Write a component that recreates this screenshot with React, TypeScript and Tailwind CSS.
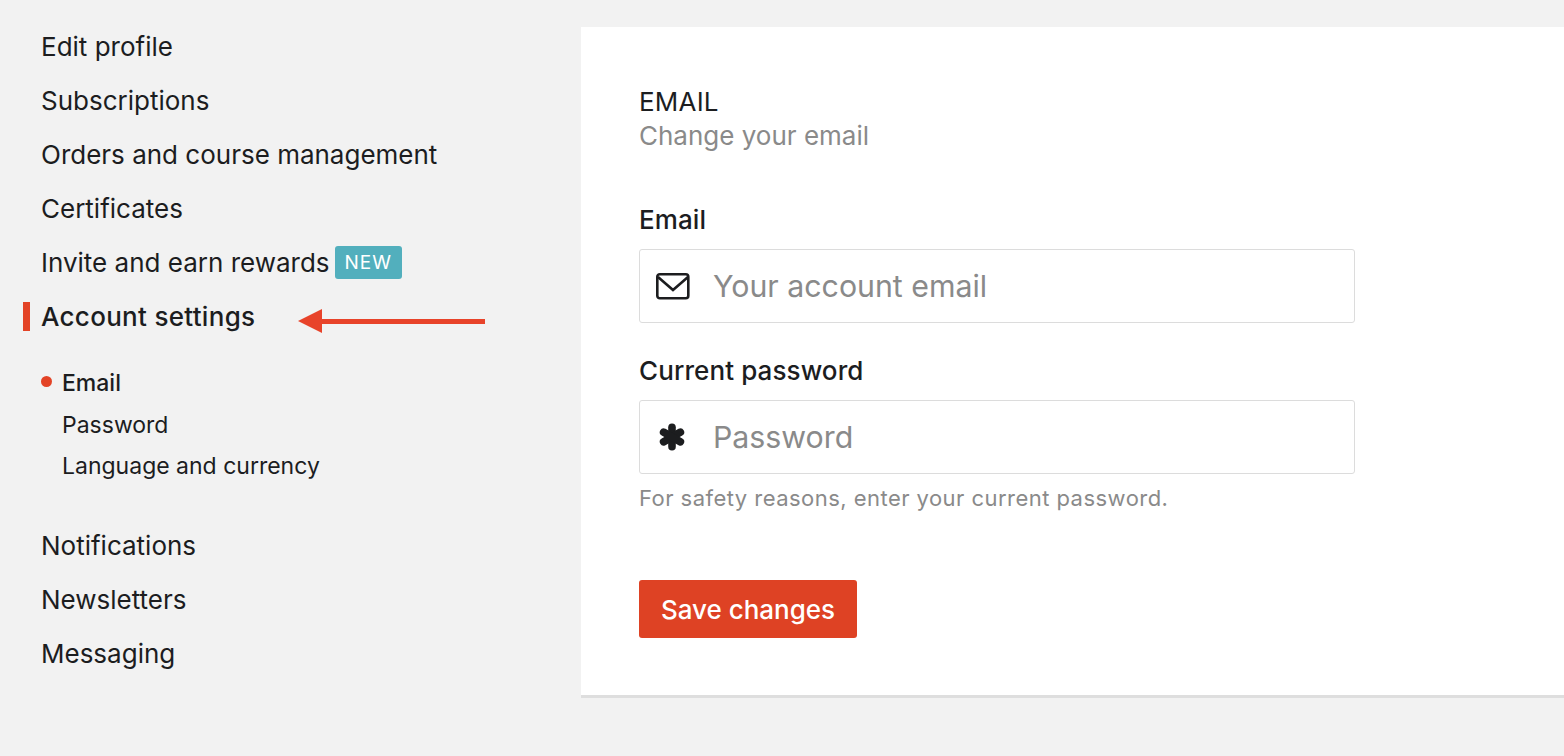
function NavItem({ label, children }: { label: string; children?: React.ReactNode }) {
  return (
    <li className="flex h-[54px] items-center gap-[5px] text-[26px] text-[#1c1d1f]">
      <span>{label}</span>
      {children}
    </li>
  );
}

function Field({ label, placeholder, icon, type = 'text' }: { label: string; placeholder: string; icon: React.ReactNode; type?: string }) {
  return (
    <div>
      <label className="block text-[26px] leading-[34px] font-medium tracking-[0.1px] text-[#1c1d1f]">{label}</label>
      <div className="mt-[12px] flex h-[74px] w-[716px] items-center rounded-[3px] border border-[#dcdcdc] bg-white">
        <span className="flex w-[73px] shrink-0 items-center pl-[16px] text-[#1c1d1f]">{icon}</span>
        <input
          type={type}
          placeholder={placeholder}
          className="w-full bg-transparent pt-[2px] text-[30.3px] outline-none placeholder:text-[#8a8a8a]"
        />
      </div>
    </div>
  );
}

export default function App() {
  return (
    <div className="relative flex h-[756px] w-[1564px] overflow-hidden bg-[#f2f2f2] font-['Inter',sans-serif]">
      <aside className="w-[581px] shrink-0 pt-[19px] pl-[41px]">
        <ul>
          <NavItem label="Edit profile" />
          <NavItem label="Subscriptions" />
          <NavItem label="Orders and course management" />
          <NavItem label="Certificates" />
          <NavItem label="Invite and earn rewards">
            <span className="rounded-[3px] bg-[#52afbd] px-[10px] py-[3px] text-[19px] leading-[27px] font-normal tracking-[0.9px] text-white">NEW</span>
          </NavItem>
          <li className="relative flex h-[54px] items-center text-[26px] font-medium tracking-[0.3px] text-[#1c1d1f]">
            <span className="absolute top-[13px] left-[-18px] h-[29px] w-[7px] bg-[#e34326]" />
            Account settings
          </li>
        </ul>
        <ul className="mt-[19px] pl-[21px] text-[23px] text-[#1c1d1f]">
          <li className="relative flex h-[42px] items-center font-medium">
            <span className="absolute top-[14px] left-[-21px] h-[11px] w-[11px] rounded-full bg-[#e34326]" />
            Email
          </li>
          <li className="flex h-[42px] items-center">Password</li>
          <li className="flex h-[41px] items-center">Language and currency</li>
        </ul>
        <ul className="mt-[31px]">
          <NavItem label="Notifications" />
          <NavItem label="Newsletters" />
          <NavItem label="Messaging" />
        </ul>
      </aside>

      <main className="mt-[27px] h-[671px] flex-1 border-b-[3px] border-[#dedede] bg-white pt-[58px] pl-[58px]">
        <h2 className="text-[26px] leading-[34px] font-normal tracking-[0.2px] text-[#1c1d1f]">EMAIL</h2>
        <p className="text-[26px] leading-[34px] text-[#8a8a8a]">Change your email</p>
        <div className="mt-[50px] flex flex-col gap-[31px]">
          <Field
            label="Email"
            placeholder="Your account email"
            icon={
              <svg width="34" height="27" viewBox="0 0 34 27" fill="none" stroke="currentColor" strokeWidth="2.6">
                <rect x="1.3" y="1.3" width="31" height="24" rx="2.5" />
                <path d="M2 4 L17 17 L32 4" />
              </svg>
            }
          />
          <div>
            <Field
              label="Current password"
              placeholder="Password"
              type="password"
              icon={
                <svg className="ml-[2px]" width="28" height="28" viewBox="0 0 28 28" fill="currentColor">
                  <rect x="10.2" y="0.5" width="7.6" height="27" rx="3.8" />
                  <rect x="10.2" y="0.5" width="7.6" height="27" rx="3.8" transform="rotate(60 14 14)" />
                  <rect x="10.2" y="0.5" width="7.6" height="27" rx="3.8" transform="rotate(-60 14 14)" />
                </svg>
              }
            />
            <p className="mt-[9px] text-[22px] leading-[30px] tracking-[0.46px] text-[#8a8a8a]">For safety reasons, enter your current password.</p>
          </div>
        </div>
        <button className="mt-[67px] h-[58px] w-[218px] rounded-[3px] bg-[#de4224] text-[26px] font-medium text-white">Save changes</button>
      </main>

      {/* annotation arrow */}
      <svg className="absolute top-[308px] left-[296px]" width="192" height="26" viewBox="0 0 192 26">
        <path d="M2 13 L26 1 L26 25 Z" fill="#e8432a" />
        <rect x="24" y="11" width="165" height="5" fill="#e8432a" />
      </svg>
    </div>
  );
}
